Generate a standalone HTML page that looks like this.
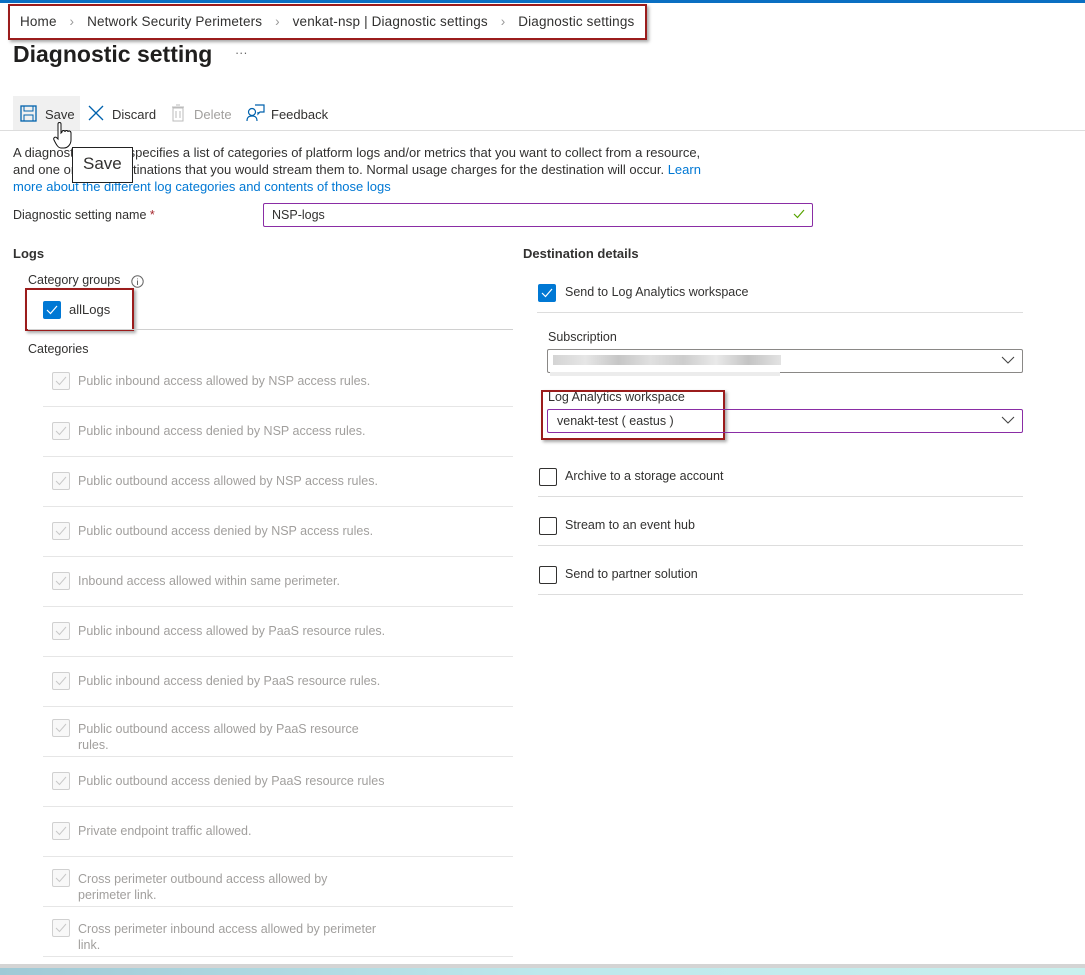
<!DOCTYPE html><html><head><style>
*{margin:0;padding:0;box-sizing:border-box}
body{width:1085px;height:975px;background:#fff;font-family:"Liberation Sans",sans-serif;font-size:12.5px;color:#323130;position:relative;overflow:hidden}
.a{position:absolute;white-space:nowrap}
.sep{position:absolute;height:1px;background:#e6e6e6}
.cb{position:absolute;width:18px;height:18px;border:1px solid #d0d0d0;border-radius:2px;background:#f8f8f8}
.cb svg{position:absolute;left:2px;top:3px}
.g{color:#a19f9d}
.ub{position:absolute;width:18px;height:18px;border:1px solid #323130;border-radius:2px}
.bl{position:absolute;width:18px;height:18px;background:#0078d4;border-radius:2px}
.red{position:absolute;border:2px solid #9b1c1c;box-shadow:2px 2px 3px rgba(0,0,0,.35)}
</style></head><body>
<div class="a" style="left:0;top:0;width:1085px;height:3px;background:#0a6fc2"></div>
<div class="red" style="left:8px;top:4px;width:639px;height:36px"></div>
<div class="a" style="left:20px;top:14px;font-size:13.5px;letter-spacing:0.15px">Home <span style="color:#999;margin:0 9px">›</span> Network Security Perimeters <span style="color:#999;margin:0 9px">›</span> venkat-nsp | Diagnostic settings <span style="color:#999;margin:0 9px">›</span> Diagnostic settings</div>
<div class="a" style="left:13px;top:41px;font-size:23px;font-weight:bold;color:#201f1e">Diagnostic setting</div>
<div class="a" style="left:235px;top:46px;color:#666">···</div>
<div class="a" style="left:13px;top:96px;width:67px;height:34px;background:#f0f0f0"></div>
<svg class="a" style="left:20px;top:105px" width="17" height="17"><rect x="1" y="1" width="15" height="15" fill="none" stroke="#0062ad" stroke-width="1.3"/><rect x="4" y="1" width="9" height="5" fill="none" stroke="#0062ad"/><rect x="4" y="10" width="9" height="6" fill="none" stroke="#0062ad"/></svg>
<div class="a" style="left:45px;top:107px;font-size:13px">Save</div>
<svg class="a" style="left:87px;top:104px" width="18" height="18"><path d="M2 2L16 16M16 2L2 16" stroke="#0062ad" stroke-width="1.3"/></svg>
<div class="a" style="left:112px;top:107px;font-size:13px">Discard</div>
<svg class="a" style="left:171px;top:104px" width="14" height="18"><rect x="2" y="4" width="10" height="13" fill="none" stroke="#bbb"/><path d="M1 3H13M5 1H9M5 7V14M9 7V14" stroke="#bbb"/></svg>
<div class="a g" style="left:194px;top:107px;font-size:13px">Delete</div>
<svg class="a" style="left:246px;top:104px" width="20" height="18"><circle cx="6" cy="8" r="3.5" fill="none" stroke="#0062ad" stroke-width="1.2"/><path d="M1 17C1 13 3 12 6 12S11 13 11 17M9 1H18V8H14L12 10V8" fill="none" stroke="#0062ad" stroke-width="1.2"/></svg>
<div class="a" style="left:271px;top:107px;font-size:13px">Feedback</div>
<div class="a" style="left:0;top:130px;width:1085px;height:1px;background:#ddd"></div>
<div class="a" style="left:13px;top:144px;line-height:17px;font-size:13px">A diagnostic setting specifies a list of categories of platform logs and/or metrics that you want to collect from a resource,<br>and one or more destinations that you would stream them to. Normal usage charges for the destination will occur. <span style="color:#0078d4">Learn</span><br><span style="color:#0078d4">more about the different log categories and contents of those logs</span></div>
<svg class="a" style="left:52px;top:122px" width="22" height="28"><path d="M6 2C6 0 9 0 9 2V11L10 10C10 8 13 8 13 10C13 8 16 8 16 10C16 8 19 9 19 11V18C19 22 16 26 12 26H9C6 26 4 22 2 18C1 16 3 14 5 16L6 17Z" fill="#fff" stroke="#111" stroke-width="1"/></svg>
<div class="a" style="left:72px;top:147px;width:61px;height:36px;border:1px solid #222;background:#fff;font-size:17px;padding:6px 0 0 10px">Save</div>
<div class="a" style="left:13px;top:208px">Diagnostic setting name <span style="color:#a4262c">*</span></div>
<div class="a" style="left:263px;top:203px;width:550px;height:24px;border:1px solid #8a2da5;border-radius:2px;padding:4px 8px">NSP-logs</div>
<svg class="a" style="left:793px;top:209px" width="12" height="10"><path d="M1 5L4.5 8.5L11 1" fill="none" stroke="#57a300" stroke-width="1.2"/></svg>
<div class="a" style="left:13px;top:246px;font-weight:bold;font-size:13px">Logs</div>
<div class="a" style="left:523px;top:246px;font-weight:bold;font-size:13px">Destination details</div>
<div class="a" style="left:28px;top:273px">Category groups</div>
<svg class="a" style="left:131px;top:275px" width="13" height="13"><circle cx="6.5" cy="6.5" r="5.7" fill="none" stroke="#666"/><path d="M6.5 5.5V10M6.5 3.5V4.3" stroke="#666"/></svg>
<div class="red" style="left:25px;top:288px;width:109px;height:43px"></div>
<div class="bl" style="left:43px;top:301px"><svg style="position:absolute;left:3px;top:4px" width="12" height="10"><path d="M1 5L4.5 8.5L11 1" fill="none" stroke="#fff" stroke-width="1.2"/></svg></div>
<div class="a" style="left:69px;top:302px;font-size:13px">allLogs</div>
<div class="sep" style="left:28px;top:329px;width:485px;background:#d0d0d0"></div>
<div class="a" style="left:28px;top:342px">Categories</div>

<div class="cb" style="left:52px;top:372px"><svg width="13" height="10"><path d="M1 5L4.5 8.5L11 1" fill="none" stroke="#c8c8c8"/></svg></div><div class="a g" style="left:78px;top:374px">Public inbound access allowed by NSP access rules.</div><div class="sep" style="left:43px;top:406px;width:470px"></div>
<div class="cb" style="left:52px;top:422px"><svg width="13" height="10"><path d="M1 5L4.5 8.5L11 1" fill="none" stroke="#c8c8c8"/></svg></div><div class="a g" style="left:78px;top:424px">Public inbound access denied by NSP access rules.</div><div class="sep" style="left:43px;top:456px;width:470px"></div>
<div class="cb" style="left:52px;top:472px"><svg width="13" height="10"><path d="M1 5L4.5 8.5L11 1" fill="none" stroke="#c8c8c8"/></svg></div><div class="a g" style="left:78px;top:474px">Public outbound access allowed by NSP access rules.</div><div class="sep" style="left:43px;top:506px;width:470px"></div>
<div class="cb" style="left:52px;top:522px"><svg width="13" height="10"><path d="M1 5L4.5 8.5L11 1" fill="none" stroke="#c8c8c8"/></svg></div><div class="a g" style="left:78px;top:524px">Public outbound access denied by NSP access rules.</div><div class="sep" style="left:43px;top:556px;width:470px"></div>
<div class="cb" style="left:52px;top:572px"><svg width="13" height="10"><path d="M1 5L4.5 8.5L11 1" fill="none" stroke="#c8c8c8"/></svg></div><div class="a g" style="left:78px;top:574px">Inbound access allowed within same perimeter.</div><div class="sep" style="left:43px;top:606px;width:470px"></div>
<div class="cb" style="left:52px;top:622px"><svg width="13" height="10"><path d="M1 5L4.5 8.5L11 1" fill="none" stroke="#c8c8c8"/></svg></div><div class="a g" style="left:78px;top:624px">Public inbound access allowed by PaaS resource rules.</div><div class="sep" style="left:43px;top:656px;width:470px"></div>
<div class="cb" style="left:52px;top:672px"><svg width="13" height="10"><path d="M1 5L4.5 8.5L11 1" fill="none" stroke="#c8c8c8"/></svg></div><div class="a g" style="left:78px;top:674px">Public inbound access denied by PaaS resource rules.</div><div class="sep" style="left:43px;top:706px;width:470px"></div>
<div class="cb" style="left:52px;top:719px"><svg width="13" height="10"><path d="M1 5L4.5 8.5L11 1" fill="none" stroke="#c8c8c8"/></svg></div><div class="a g" style="left:78px;top:721px;line-height:16px">Public outbound access allowed by PaaS resource<br>rules.</div><div class="sep" style="left:43px;top:756px;width:470px"></div>
<div class="cb" style="left:52px;top:772px"><svg width="13" height="10"><path d="M1 5L4.5 8.5L11 1" fill="none" stroke="#c8c8c8"/></svg></div><div class="a g" style="left:78px;top:774px">Public outbound access denied by PaaS resource rules</div><div class="sep" style="left:43px;top:806px;width:470px"></div>
<div class="cb" style="left:52px;top:822px"><svg width="13" height="10"><path d="M1 5L4.5 8.5L11 1" fill="none" stroke="#c8c8c8"/></svg></div><div class="a g" style="left:78px;top:824px">Private endpoint traffic allowed.</div><div class="sep" style="left:43px;top:856px;width:470px"></div>
<div class="cb" style="left:52px;top:869px"><svg width="13" height="10"><path d="M1 5L4.5 8.5L11 1" fill="none" stroke="#c8c8c8"/></svg></div><div class="a g" style="left:78px;top:871px;line-height:16px">Cross perimeter outbound access allowed by<br>perimeter link.</div><div class="sep" style="left:43px;top:906px;width:470px"></div>
<div class="cb" style="left:52px;top:919px"><svg width="13" height="10"><path d="M1 5L4.5 8.5L11 1" fill="none" stroke="#c8c8c8"/></svg></div><div class="a g" style="left:78px;top:921px;line-height:16px">Cross perimeter inbound access allowed by perimeter<br>link.</div><div class="sep" style="left:43px;top:956px;width:470px"></div>

<div class="bl" style="left:538px;top:284px"><svg style="position:absolute;left:3px;top:4px" width="12" height="10"><path d="M1 5L4.5 8.5L11 1" fill="none" stroke="#fff" stroke-width="1.2"/></svg></div>
<div class="a" style="left:565px;top:285px">Send to Log Analytics workspace</div>
<div class="sep" style="left:537px;top:312px;width:486px;background:#ddd"></div>
<div class="a" style="left:548px;top:330px">Subscription</div>
<div class="a" style="left:547px;top:349px;width:476px;height:24px;border:1px solid #8a8886;border-radius:2px"></div>
<div class="a" style="left:553px;top:355px;width:228px;height:10px;background:linear-gradient(90deg,#c9c9c9,#e0e0e0,#b8b8b8,#d8d8d8,#c0c0c0,#e4e4e4,#b5b5b5,#dcdcdc);opacity:.8"></div>
<div class="a" style="left:550px;top:372px;width:230px;height:4px;background:#ececec"></div>
<svg class="a" style="left:1001px;top:356px" width="14" height="9"><path d="M1 1L7 7L13 1" fill="none" stroke="#444" stroke-width="1.1"/></svg>
<div class="red" style="left:541px;top:390px;width:184px;height:50px"></div>
<div class="a" style="left:548px;top:390px">Log Analytics workspace</div>
<div class="a" style="left:547px;top:409px;width:476px;height:24px;border:1px solid #8a2da5;border-radius:2px;padding:4px 9px">venakt-test ( eastus )</div>
<svg class="a" style="left:1001px;top:416px" width="14" height="9"><path d="M1 1L7 7L13 1" fill="none" stroke="#444" stroke-width="1.1"/></svg>
<div class="ub" style="left:539px;top:468px"></div><div class="a" style="left:565px;top:469px">Archive to a storage account</div><div class="sep" style="left:538px;top:496px;width:485px;background:#ddd"></div>
<div class="ub" style="left:539px;top:517px"></div><div class="a" style="left:565px;top:518px">Stream to an event hub</div><div class="sep" style="left:538px;top:545px;width:485px;background:#ddd"></div>
<div class="ub" style="left:539px;top:566px"></div><div class="a" style="left:565px;top:567px">Send to partner solution</div><div class="sep" style="left:538px;top:594px;width:485px;background:#ddd"></div>

<div class="a" style="left:0;top:964px;width:1085px;height:4px;background:#d4d4d4"></div>
<div class="a" style="left:0;top:968px;width:1085px;height:7px;background:linear-gradient(90deg,#9fc9d6,#bde8ec,#c8f0ee)"></div>
</body></html>
